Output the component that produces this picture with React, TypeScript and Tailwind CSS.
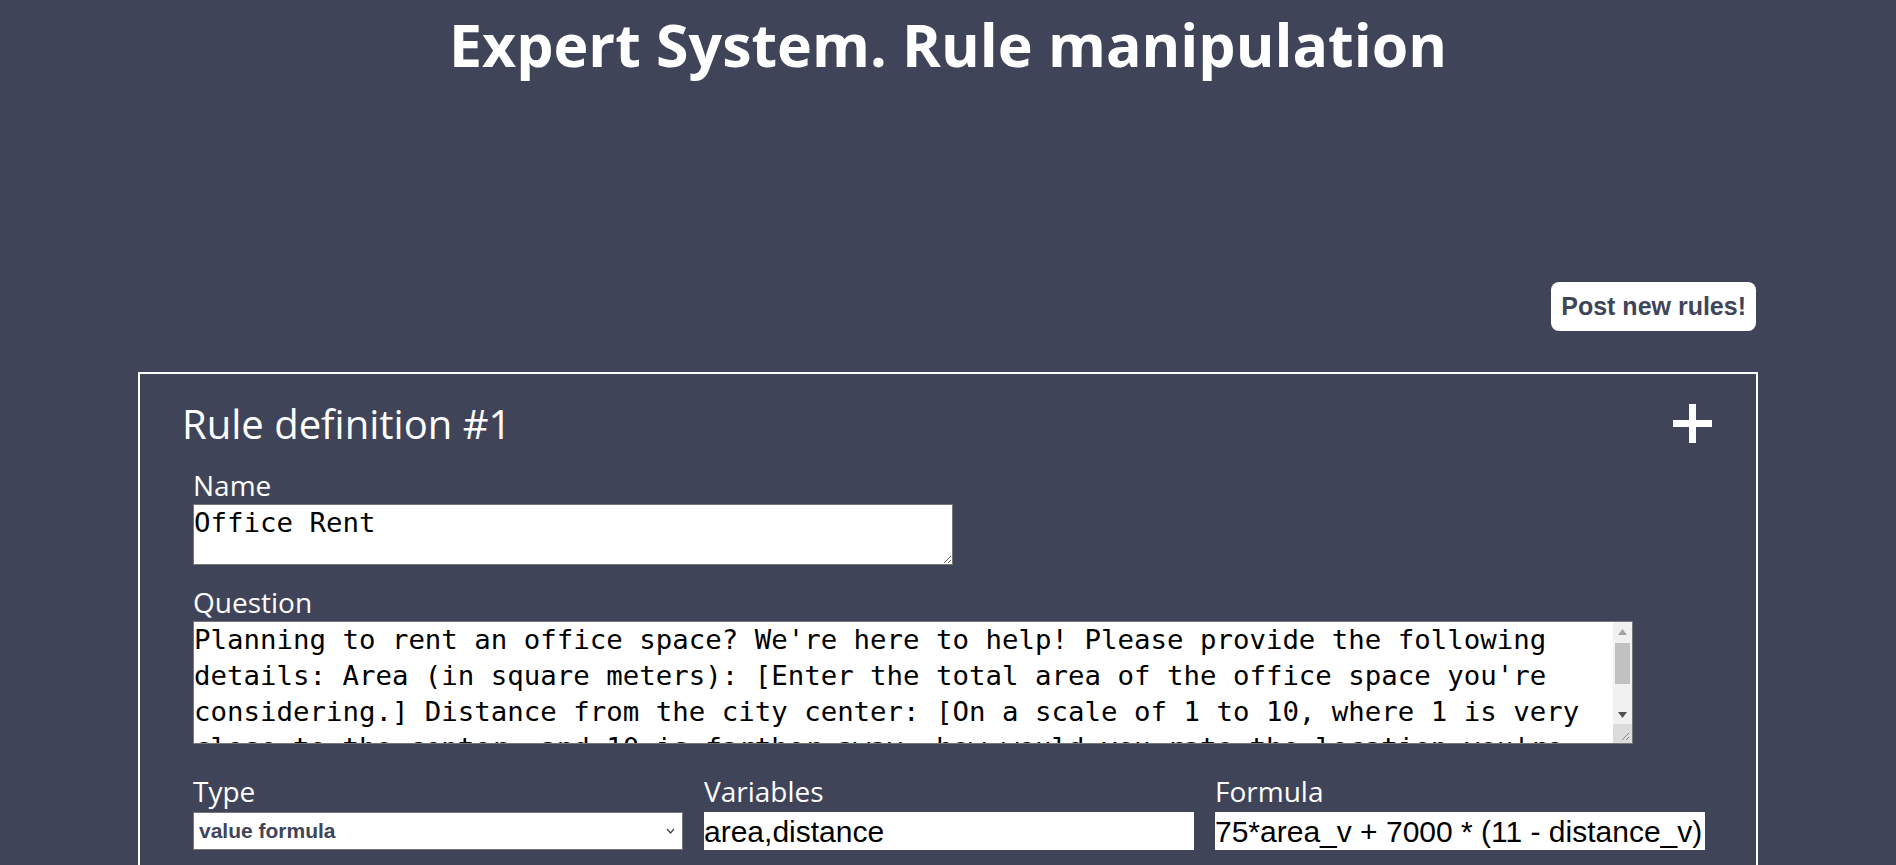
import React from "react";

const question =
  "Planning to rent an office space? We're here to help! Please provide the following details: Area (in square meters): [Enter the total area of the office space you're considering.] Distance from the city center: [On a scale of 1 to 10, where 1 is very close to the center, and 10 is farther away, how would you rate the location you're considering?] Based on this information we will estimate the monthly rent for you.";

function Plus() {
  return (
    <svg width="39" height="39" viewBox="0 0 39 39" className="block">
      <rect x="16" y="0" width="7" height="39" fill="white" />
      <rect x="0" y="16" width="39" height="7" fill="white" />
    </svg>
  );
}

function FakeScrollbar() {
  return (
    <div className="flex w-[19px] shrink-0 flex-col bg-[#f1f1f1]">
      <div className="flex h-[19px] items-center justify-center">
        <svg width="9" height="6" viewBox="0 0 9 6">
          <polygon points="4.5,0 9,6 0,6" fill="#a3a3a3" />
        </svg>
      </div>
      <div className="mx-[2px] mt-[2px] h-[41px] bg-[#c1c1c1]" />
      <div className="flex-1" />
      <div className="flex h-[19px] items-center justify-center">
        <svg width="9" height="6" viewBox="0 0 9 6">
          <polygon points="0,0 9,0 4.5,6" fill="#505050" />
        </svg>
      </div>
      <div className="flex h-[19px] items-end justify-end bg-[#dcdcdc] p-[2px]">
        <svg width="10" height="10" viewBox="0 0 10 10">
          <line x1="9" y1="2" x2="2" y2="9" stroke="#888" strokeWidth="1" />
          <line x1="9" y1="6" x2="6" y2="9" stroke="#888" strokeWidth="1" />
        </svg>
      </div>
    </div>
  );
}

export default function App() {
  return (
    <div className="min-h-screen bg-[#404459] font-['Open_Sans',sans-serif] text-white">
      <h1 className="m-0 text-center text-[59px] font-bold leading-[88px] text-white">
        Expert System. Rule manipulation
      </h1>
      <div className="mx-auto w-[1620px]">
        <div className="mt-[194px] flex justify-end pr-[2px]">
          <button className="h-[49px] rounded-[8px] bg-white px-[10px] font-['Liberation_Sans',Arial,sans-serif] text-[25px] font-bold leading-[29px] text-[#404459]">
            Post new rules!
          </button>
        </div>
        <div className="mt-[41px] border-2 border-white pb-[20px] pl-[42px] pr-[44px] pt-[21px]">
          <div className="flex items-start justify-between">
            <h2 className="m-0 text-[40px] font-normal leading-[57px]">Rule definition #1</h2>
            <div className="mt-[9px]">
              <Plus />
            </div>
          </div>
          <div className="pl-[11px]">
            <label className="mt-[17px] block text-[28px] leading-[32px]">Name</label>
            <textarea
              defaultValue="Office Rent"
              className="mt-[3px] block h-[61px] w-[760px] border border-[#767676] bg-white p-0 font-['DejaVu_Sans_Mono',monospace] text-[27.4px] leading-[36px] text-black outline-none"
            />
            <label className="mt-[21px] block text-[28px] leading-[32px]">Question</label>
            <div className="mt-[3px] flex h-[123px] w-[1440px] border border-[#767676] bg-white">
              <textarea
                defaultValue={question}
                className="block h-full flex-1 resize-none overflow-hidden bg-white p-0 font-['DejaVu_Sans_Mono',monospace] text-[27.4px] leading-[36px] text-black outline-none"
              />
              <FakeScrollbar />
            </div>
            <div className="mt-[31px] grid w-[1512px] grid-cols-3 gap-x-[21px]">
              <div>
                <label className="block text-[28px] leading-[32px]">Type</label>
                <div className="relative mt-[5px]">
                  <select
                    defaultValue="value"
                    className="block h-[38px] w-full appearance-none border border-[#767676] bg-white pl-[5px] font-['Liberation_Sans',Arial,sans-serif] text-[21px] font-bold text-[#404459] outline-none"
                  >
                    <option value="value">value formula</option>
                    <option value="bool">boolean</option>
                  </select>
                  <svg
                    width="9"
                    height="6"
                    viewBox="0 0 9 6"
                    className="pointer-events-none absolute right-[8px] top-[16px]"
                  >
                    <polyline points="1,1 4.5,5 8,1" fill="none" stroke="#404459" strokeWidth="1.3" />
                  </svg>
                </div>
              </div>
              <div>
                <label className="block text-[28px] leading-[32px]">Variables</label>
                <input
                  defaultValue="area,distance"
                  className="mt-[5px] block h-[38px] w-full border-0 bg-white px-0 font-['Liberation_Sans',Arial,sans-serif] text-[30px] text-black outline-none"
                />
              </div>
              <div>
                <label className="block text-[28px] leading-[32px]">Formula</label>
                <input
                  defaultValue="75*area_v + 7000 * (11 - distance_v)"
                  className="mt-[5px] block h-[38px] w-full border-0 bg-white px-0 font-['Liberation_Sans',Arial,sans-serif] text-[30px] text-black outline-none"
                />
              </div>
            </div>
          </div>
        </div>
      </div>
    </div>
  );
}
